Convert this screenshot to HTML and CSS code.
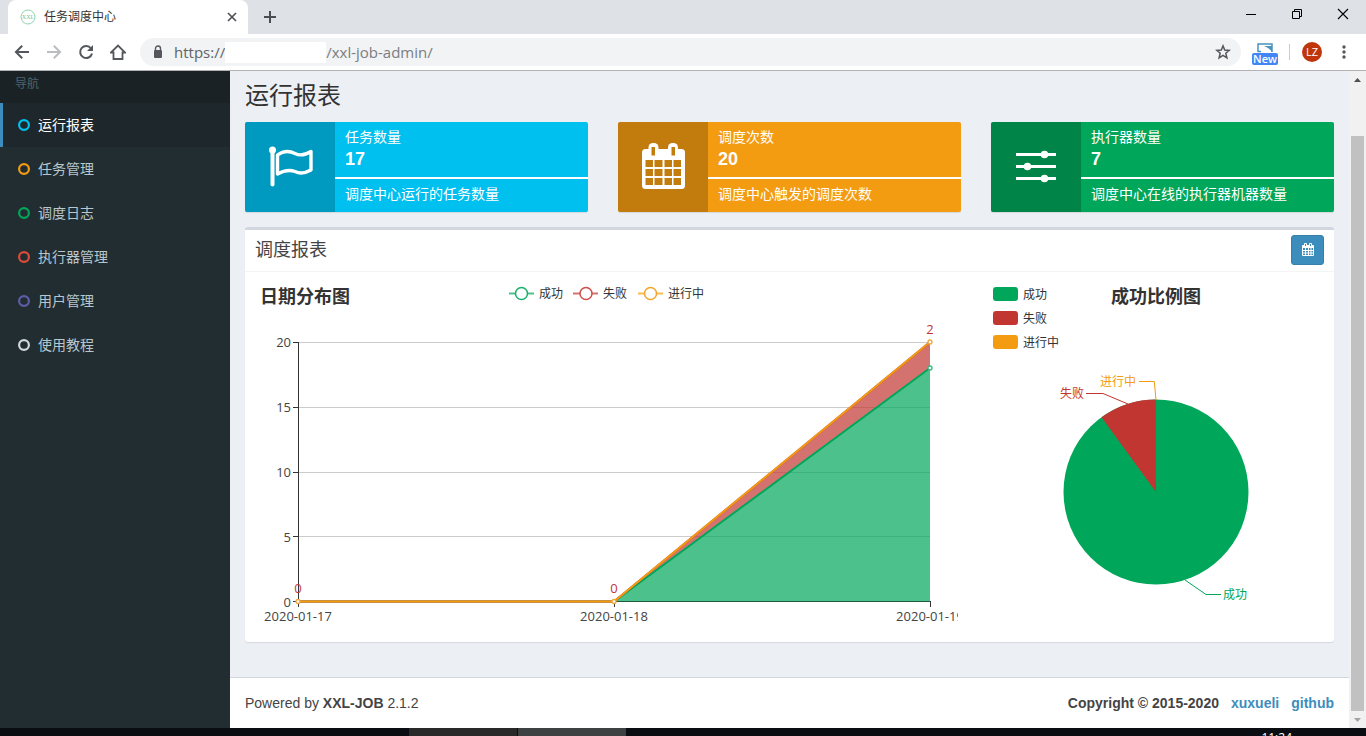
FILE: index.html
```html
<!DOCTYPE html>
<html lang="zh-CN">
<head>
<meta charset="utf-8">
<title>任务调度中心</title>
<link rel="stylesheet" href="styles.css">
</head>
<body>
<div class="browser">
  <div class="tabstrip">
    <div class="tab">
      <svg class="favicon" width="16" height="16" viewBox="0 0 16 16"><circle cx="8" cy="8" r="7" fill="none" stroke="#8fd3b4" stroke-width="1"/><text x="8" y="10" text-anchor="middle" class="favicon-text">XXL</text></svg>
      <span class="tab-title">任务调度中心</span>
      <button class="plain" aria-label="关闭标签页"><svg width="10" height="10" viewBox="0 0 10 10"><path d="M1 1l8 8M9 1l-8 8" stroke="#4a4d51" stroke-width="1.6"/></svg></button>
    </div>
    <button class="plain new-tab" aria-label="新标签页"><svg width="12" height="12" viewBox="0 0 12 12"><path d="M6 0v12M0 6h12" stroke="#4a4d51" stroke-width="2"/></svg></button>
    <div class="window-controls">
      <button class="plain" aria-label="最小化"><svg width="12" height="12" viewBox="0 0 12 12"><path d="M1 6.500h10" stroke="#000"/></svg></button>
      <button class="plain" aria-label="还原"><svg width="12" height="12" viewBox="0 0 12 12"><path d="M1.500 3.500h7v7h-7zM3.500 3.500v-2h7v7h-2" fill="none" stroke="#000"/></svg></button>
      <button class="plain" aria-label="关闭"><svg width="12" height="12" viewBox="0 0 12 12"><path d="M1 1l10 10M11 1L1 11" stroke="#000" stroke-width="1.100"/></svg></button>
    </div>
  </div>

  <div class="toolbar">
    <div class="nav-buttons">
      <button class="plain" aria-label="后退"><svg width="16" height="16" viewBox="0 0 16 16"><path d="M15 8H2M8.200 1.700L1.900 8l6.300 6.300" fill="none" stroke="#54585d" stroke-width="2"/></svg></button>
      <button class="plain" aria-label="前进"><svg width="16" height="16" viewBox="0 0 16 16"><path d="M1 8h13M7.800 1.700L14.100 8l-6.300 6.300" fill="none" stroke="#bcbdbf" stroke-width="2"/></svg></button>
      <button class="plain" aria-label="重新加载"><svg width="16" height="16" viewBox="0 0 16 16"><path d="M13 4.500A6 6 0 1 0 14 9.500" fill="none" stroke="#54585d" stroke-width="2"/><path d="M15 1v6H9z" fill="#54585d"/></svg></button>
      <button class="plain" aria-label="主页"><svg width="16" height="16" viewBox="0 0 16 16"><path d="M1 8.500L8 1.500l7 7h-2.500V15h-9V8.500z" fill="none" stroke="#54585d" stroke-width="1.800"/></svg></button>
    </div>
    <div class="address">
      <svg width="10" height="14" viewBox="0 0 10 14"><rect x="1" y="5" width="8" height="8" rx="1" fill="#54585d"/><path d="M2.500 5V3.500a2.500 2.500 0 0 1 5 0V5" fill="none" stroke="#54585d" stroke-width="1.400"/></svg>
      <div class="url"><span>https://</span><span class="url-mask"></span><span class="url-path">/xxl-job-admin/</span></div>
      <button class="plain" aria-label="收藏"><svg width="16" height="16" viewBox="0 0 16 16"><path d="M8 1.900l1.700 4.200 4.500.3-3.400 2.900 1.100 4.500L8 11.400l-3.900 2.400 1.100-4.500L1.800 6.400l4.500-.3z" fill="none" stroke="#54585d" stroke-width="1.500"/></svg></button>
    </div>
    <button class="plain extension" aria-label="扩展程序"><svg width="16" height="10" viewBox="0 0 16 10"><path d="M1 1h14v9H1z" fill="#fff"/><path d="M4 8.500H1V1h14v8" fill="none" stroke="#4a93bd" stroke-width="1.500"/><path d="M7 3h8v6q-2-3.500-8-6z" fill="#4a93bd"/></svg><span class="badge">New</span></button>
    <span class="separator"></span>
    <button class="avatar">LZ</button>
    <button class="plain menu" aria-label="菜单"><svg width="4" height="14" viewBox="0 0 4 14"><g fill="#54585d"><circle cx="2" cy="2" r="1.700"/><circle cx="2" cy="7" r="1.700"/><circle cx="2" cy="12" r="1.700"/></g></svg></button>
  </div>

  <div class="page">
    <nav class="sidebar">
      <div class="sidebar-header">导航</div>
      <a href="#" class="item active"><svg class="aqua" width="12" height="12" viewBox="0 0 12 12"><circle cx="6" cy="6" r="4.900" fill="none" stroke="currentColor" stroke-width="2.200"/></svg>运行报表</a>
      <a href="#" class="item"><svg class="yellow" width="12" height="12" viewBox="0 0 12 12"><circle cx="6" cy="6" r="4.900" fill="none" stroke="currentColor" stroke-width="2.200"/></svg>任务管理</a>
      <a href="#" class="item"><svg class="green" width="12" height="12" viewBox="0 0 12 12"><circle cx="6" cy="6" r="4.900" fill="none" stroke="currentColor" stroke-width="2.200"/></svg>调度日志</a>
      <a href="#" class="item"><svg class="red" width="12" height="12" viewBox="0 0 12 12"><circle cx="6" cy="6" r="4.900" fill="none" stroke="currentColor" stroke-width="2.200"/></svg>执行器管理</a>
      <a href="#" class="item"><svg class="purple" width="12" height="12" viewBox="0 0 12 12"><circle cx="6" cy="6" r="4.900" fill="none" stroke="currentColor" stroke-width="2.200"/></svg>用户管理</a>
      <a href="#" class="item"><svg class="gray" width="12" height="12" viewBox="0 0 12 12"><circle cx="6" cy="6" r="4.900" fill="none" stroke="currentColor" stroke-width="2.200"/></svg>使用教程</a>
    </nav>

    <div class="content">
      <main>
        <h1>运行报表</h1>
        <div class="cards">
          <section class="card bg-aqua">
            <div class="card-icon"><svg width="46" height="42" viewBox="0 0 46 42"><circle cx="5.500" cy="4" r="3.500" fill="#fff"/><path d="M5.500 4v34.500" stroke="#fff" stroke-width="4" stroke-linecap="round"/><path d="M10.500 9C16 5 22 4.500 28 7.500q7 3.500 16-2V24q-9 5-16 1.500Q20 22.500 10.500 28z" fill="none" stroke="#fff" stroke-width="3.400" stroke-linejoin="round"/></svg></div>
            <div class="card-body"><div>任务数量</div><strong>17</strong><hr><div>调度中心运行的任务数量</div></div>
          </section>
          <section class="card bg-yellow">
            <div class="card-icon"><svg width="43" height="48" viewBox="0 0 43 48"><rect y="6" width="43" height="40" rx="3.500" fill="#fff"/><rect x="6.500" width="10" height="15" rx="4.500" fill="#fff"/><rect x="26" width="10" height="15" rx="4.500" fill="#fff"/><path d="M9.500 4H13v8.500H9.500zM29.500 4H33v8.500h-3.500zM3.500 17H11v7H3.500zM12.500 17h8v7h-8zM22.500 17H30v7h-7.500zM31.500 17H39v7h-7.500zM3.500 26H11v7H3.500zM12.500 26h8v7h-8zM22.500 26H30v7h-7.500zM31.500 26H39v7h-7.500zM3.500 35H11v7H3.500zM12.500 35h8v7h-8zM22.500 35H30v7h-7.500zM31.500 35H39v7h-7.500z" fill="#c27d0e"/></svg></div>
            <div class="card-body"><div>调度次数</div><strong>20</strong><hr><div>调度中心触发的调度次数</div></div>
          </section>
          <section class="card bg-green">
            <div class="card-icon"><svg width="40" height="36" viewBox="0 0 40 36"><path d="M0 5.500h40M0 17.500h40M0 29.500h40" stroke="#fff" stroke-width="3"/><g fill="#fff"><circle cx="28.500" cy="5.500" r="3.800"/><circle cx="11.500" cy="17.500" r="3.800"/><circle cx="28.500" cy="29.500" r="3.800"/></g></svg></div>
            <div class="card-body"><div>执行器数量</div><strong>7</strong><hr><div>调度中心在线的执行器机器数量</div></div>
          </section>
        </div>

        <section class="box">
          <header class="box-header">
            <h2>调度报表</h2>
            <button class="range" aria-label="选择日期"><svg width="12" height="13" viewBox="0 0 12 13"><rect x="0" y="2" width="12" height="11" rx="1" fill="#fff"/><rect x="2" width="3" height="4" rx="1" fill="#fff"/><rect x="7" width="3" height="4" rx="1" fill="#fff"/><path d="M1 5h2v2H1zM4 5h2v2H4zM7 5h1.500v2H7zM9.500 5H11v2H9.500zM1 8h2v1.500H1zM4 8h2v1.500H4zM7 8h1.500v1.500H7zM9.500 8H11v1.500H9.500zM1 10.500h2V12H1zM4 10.500h2V12H4zM7 10.500h1.500V12H7zM9.500 10.500H11V12H9.500zM3 1h1v2H3zM8 1h1v2H8z" fill="#3c8dbc"/></svg></button>
          </header>
          <div class="box-body">
            <svg class="chart" viewBox="0 0 703 350" role="img" aria-label="日期分布图">
              <text class="chart-title" x="5" y="21">日期分布图</text>
              <g stroke-width="2" fill="none">
                <path d="M254 11.500h25" stroke="#00a65a" opacity=".7"/><path d="M318 11.500h25" stroke="#c23632" opacity=".7"/><path d="M383 11.500h25" stroke="#f39c12" opacity=".7"/>
              </g>
              <g stroke-width="1.500" fill="#fff">
                <circle cx="266.500" cy="11.500" r="6" stroke="#1aaf6b"/><circle cx="331" cy="11.500" r="6" stroke="#cb504d"/><circle cx="395.500" cy="11.500" r="6" stroke="#f4a52a"/>
              </g>
              <g class="label"><text x="284" y="16">成功</text><text x="348" y="16">失败</text><text x="413" y="16">进行中</text></g>
              <path d="M43 60.500h632M43 125.500h632M43 190.500h632M43 254.500h632" stroke="#ccc"/>
              <path d="M43.500 60v265M38 60.500h5M38 125.500h5M38 190.500h5M38 254.500h5M38 319.500h638M359.500 320v5M675.500 320v5" fill="none" stroke="#333"/>
              <path d="M359 319.500L675 86v233.500z" fill="#00a65a" opacity=".7"/>
              <path d="M359 319.500L675 60v26z" fill="#c23632" opacity=".7"/>
              <g fill="none" stroke-width="2" stroke-linejoin="bevel">
                <path d="M43 319.500h316L675 86" stroke="#00a65a"/>
                <path d="M43 319.500h316L675 60" stroke="#c23632"/>
                <path d="M43 319.500h316L675 60" stroke="#f39c12"/>
              </g>
              <g fill="#fff" stroke="#f0a63c" stroke-width="1.300">
                <circle cx="675" cy="86" r="2" stroke="#35b87c"/><circle cx="43" cy="319.500" r="2"/><circle cx="359" cy="319.500" r="2"/><circle cx="675" cy="60" r="2"/>
              </g>
              <g class="num end"><text x="36" y="65">20</text><text x="36" y="130">15</text><text x="36" y="195">10</text><text x="36" y="260">5</text><text x="36" y="325">0</text></g>
              <g class="num mid"><text x="43" y="339">2020-01-17</text><text x="359" y="339">2020-01-18</text><text x="675" y="339">2020-01-19</text></g>
              <g class="num mid danger"><text x="43" y="311">0</text><text x="359" y="311">0</text><text x="675" y="52">2</text></g>
            </svg>
            <svg class="chart" viewBox="0 0 336 350" role="img" aria-label="成功比例图">
              <text class="chart-title mid" x="168" y="21">成功比例图</text>
              <rect x="5" y="5" width="25" height="14" rx="3" fill="#00a65a"/><rect x="5" y="29" width="25" height="14" rx="3" fill="#c23632"/><rect x="5" y="53" width="25" height="14" rx="3" fill="#f39c12"/>
              <g class="label"><text x="35" y="17">成功</text><text x="35" y="41">失败</text><text x="35" y="65">进行中</text></g>
              <circle cx="168" cy="210" r="92.500" fill="#00a65a"/>
              <path d="M168 210L113.600 135.200A92.500 92.500 0 0 1 168 117.500z" fill="#c23632"/>
              <g fill="none"><path d="M168 118l-1.700-18.500H151" stroke="#f39c12"/><path d="M140 122l-25-10.500H98" stroke="#c23632"/><path d="M197 298l21 14.500h15" stroke="#00a65a"/></g>
              <g class="label"><text class="end warning" x="148" y="104">进行中</text><text class="end danger" x="96" y="116">失败</text><text class="success" x="235" y="317">成功</text></g>
            </svg>
          </div>
        </section>
      </main>
      <footer>
        <div>Powered by <b>XXL-JOB</b> 2.1.2</div>
        <div class="copyright"><span>Copyright © 2015-2020</span><a href="#">xuxueli</a><a href="#">github</a></div>
      </footer>
    </div>

    <div class="scrollbar">
      <svg width="17" height="17" viewBox="0 0 17 17"><path d="M5 11l3.500-4 3.500 4z" fill="#505050"/></svg>
      <div class="track"><div class="thumb"></div></div>
      <svg width="17" height="17" viewBox="0 0 17 17"><path d="M5 7l3.500 4L12 7z" fill="#a3a3a3"/></svg>
    </div>
  </div>

  <div class="taskbar"><span class="task"></span><span class="task current"></span><span class="clock">11:24</span></div>
</div>
</body>
</html>
```

FILE: styles.css
```css
* { box-sizing: border-box; }
body {
  margin: 0;
  font: 14px/20px "Liberation Sans", "Noto Sans CJK SC", sans-serif;
  color: #333;
}
a { text-decoration: none; }
svg { display: block; flex: none; }
.plain { display: block; padding: 0; border: 0; background: none; flex: none; }

.browser { display: flex; flex-direction: column; height: 100vh; overflow: hidden; }

/* Browser frame */
.tabstrip { display: flex; align-items: center; flex: none; height: 34px; padding-left: 8px; background: #dee1e6; }
.tab { display: flex; align-items: center; gap: 8px; width: 240px; height: 34px; padding: 0 11px 0 12px; border-radius: 8px 8px 0 0; background: #fff; }
.tab-title { flex: 1; font-size: 12px; }
.favicon-text { font: 6px "Liberation Serif", serif; fill: #6cc49c; }
.new-tab { margin-left: 16px; }
.window-controls { display: flex; gap: 34px; margin: 0 17px 6px auto; }

.toolbar { display: flex; align-items: center; flex: none; height: 37px; padding: 0 20px 0 14px; border-bottom: 1px solid #b3b1b4; background: #fff; }
.nav-buttons { display: flex; gap: 16px; margin-right: 14px; }
.address { display: flex; align-items: center; flex: 1; height: 28px; padding: 0 10px 0 13px; border-radius: 14px; background: #f1f3f4; }
.url { display: flex; align-items: center; flex: 1; margin-left: 11px; font: 15px/20px "Open Sans", sans-serif; color: #5f6368; }
.url-mask { width: 101px; height: 21px; background: #fff; }
.url-path { color: #7a7e83; }
.extension { display: flex; flex-direction: column; align-items: center; margin: 4px 11px 0; }
.badge { width: 26px; height: 12px; border-radius: 2px; background: #4285f4; color: #fff; font: 600 11px/12px "Open Sans", sans-serif; }
.separator { width: 1px; height: 16px; background: #ccc; }
.avatar { width: 20px; height: 20px; margin: 0 20px 0 12px; padding: 0; border: 0; border-radius: 50%; background: #bf360c; color: #fff; font: 11px/20px "Open Sans", sans-serif; }

.page { display: flex; flex: 1; min-height: 0; }

/* Navigation */
.sidebar { flex: none; width: 230px; background: #222d32; }
.sidebar-header { padding: 3px 15px 9px; background: #1a2226; color: #4b646f; font-size: 12px; }
.item { display: flex; align-items: center; gap: 8px; height: 44px; padding-left: 15px; border-left: 3px solid transparent; color: #b8c7ce; }
.item.active { border-left-color: #3c8dbc; background: #1e282c; color: #fff; }
.aqua { color: #00c0ef; }
.yellow { color: #f39c12; }
.green { color: #00a65a; }
.red { color: #dd4b39; }
.purple { color: #605ca8; }
.gray { color: #d2d6de; }

/* Report */
.content { display: flex; flex-direction: column; flex: 1; min-width: 0; background: #ecf0f5; }
main { flex: 1; padding: 12px 15px 0; }
h1 { margin: 0 0 13px; font-size: 24px; line-height: 26px; font-weight: 400; }
.cards { display: grid; grid-template-columns: repeat(3, 1fr); gap: 30px; margin-bottom: 15px; }
.card { display: flex; min-height: 90px; border-radius: 2px; overflow: hidden; box-shadow: 0 1px 1px rgba(0, 0, 0, .1); color: #fff; }
.card-icon { display: flex; align-items: center; justify-content: center; flex: none; width: 90px; background: rgba(0, 0, 0, .2); }
.card-body { flex: 1; padding: 5px 10px; }
.card-body strong { display: block; font-size: 18px; line-height: 25px; }
.card-body hr { height: 2px; margin: 5px -10px; border: 0; background: #fff; }
.bg-aqua { background: #00c0ef; }
.bg-yellow { background: #f39c12; }
.bg-green { background: #00a65a; }

.box { border-top: 3px solid #d2d6de; border-radius: 3px; background: #fff; box-shadow: 0 1px 1px rgba(0, 0, 0, .1); }
.box-header { display: flex; align-items: center; justify-content: space-between; height: 42px; padding: 0 10px 2px; border-bottom: 1px solid #f4f4f4; }
h2 { margin: 0; font-size: 18px; line-height: 20px; font-weight: 400; color: #444; }
.range { display: flex; align-items: center; justify-content: center; width: 33px; height: 30px; padding: 0; border: 1px solid #367fa9; border-radius: 3px; background: #3c8dbc; }
.box-body { display: grid; grid-template-columns: 703fr 336fr; gap: 30px; padding: 10px; }
.chart { width: 100%; height: auto; overflow: hidden; }
.chart-title { font: 700 18px "Noto Sans CJK SC", sans-serif; fill: #333; }
.label { font: 12px "Noto Sans CJK SC", sans-serif; fill: #333; }
.num { font: 13px "Open Sans", sans-serif; fill: #444; }
.mid { text-anchor: middle; }
.end { text-anchor: end; }
.danger { fill: #c23632; }
.warning { fill: #f39c12; }
.success { fill: #00a65a; }

footer { display: flex; justify-content: space-between; padding: 15px; border-top: 1px solid #d2d6de; background: #fff; color: #444; }
.copyright { display: flex; gap: 12px; font-weight: 700; }
.copyright a { color: #3c8dbc; }

.scrollbar { display: flex; flex-direction: column; flex: none; width: 17px; background: #f1f1f1; }
.track { display: flex; flex-direction: column; justify-content: flex-end; flex: 1; }
.thumb { height: 92.3%; margin: 0 2px; background: #c1c1c1; }

.taskbar { display: flex; gap: 1px; flex: none; height: 8px; padding: 0 74px 0 409px; overflow: hidden; background: #0a0e12; }
.task { width: 108px; background: #292929; }
.task.current { background: #3d4142; }
.clock { margin: 2px 0 0 auto; color: #fff; font: 12px/16px "Open Sans", sans-serif; }
```
